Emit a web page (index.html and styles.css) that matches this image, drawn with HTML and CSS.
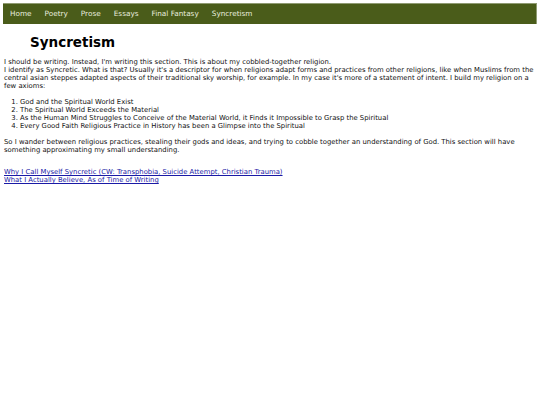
FILE: index.html
```html
<!DOCTYPE html>
<html>
<head>
<meta charset="utf-8">
<link rel="stylesheet" href="styles.css">
</head>
<body>
<nav class="nav">
  <a href="#">Home</a>
  <a href="#">Poetry</a>
  <a href="#">Prose</a>
  <a href="#">Essays</a>
  <a href="#">Final Fantasy</a>
  <a href="#">Syncretism</a>
</nav>
<main class="content">
  <h1 class="title">Syncretism</h1>
  <p class="para">I should be writing. Instead, I'm writing this section. This is about my cobbled-together religion.<br>
  I identify as Syncretic. What is that? Usually it's a descriptor for when religions adapt forms and practices from other religions, like when Muslims from the central asian steppes adapted aspects of their traditional sky worship, for example. In my case it's more of a statement of intent. I build my religion on a few axioms:</p>
  <ol class="axioms">
    <li>God and the Spiritual World Exist</li>
    <li>The Spiritual World Exceeds the Material</li>
    <li>As the Human Mind Struggles to Conceive of the Material World, it Finds it Impossible to Grasp the Spiritual</li>
    <li>Every Good Faith Religious Practice in History has been a Glimpse into the Spiritual</li>
  </ol>
  <p class="para">So I wander between religious practices, stealing their gods and ideas, and trying to cobble together an understanding of God. This section will have something approximating my small understanding.</p>
  <div class="links">
    <a href="#">Why I Call Myself Syncretic (CW: Transphobia, Suicide Attempt, Christian Trauma)</a><br>
    <a href="#">What I Actually Believe, As of Time of Writing</a>
  </div>
</main>
</body>
</html>
```

FILE: styles.css
```css
html, body {
  margin: 0;
  padding: 0;
  background: #ffffff;
}
body {
  font-family: "DejaVu Sans", Verdana, sans-serif;
  font-size: 6.85px;
  line-height: 8px;
  color: #111111;
  padding: 3px 3px 0 4px;
}
.nav {
  margin-left: -1px;
  height: 20px;
  background: #4a5c1a;
  border-top: 1px solid #8f9b72;
  border-right: 1px solid #8f9b72;
  display: flex;
  align-items: center;
  gap: 13px;
  padding-left: 7px;
}
.nav a {
  color: #e8ecdf;
  text-decoration: none;
  font-size: 7.3px;
}
.content {
  padding-top: 10px;
}
.title {
  font-size: 13.5px;
  line-height: 16px;
  font-weight: bold;
  margin: 0 0 0 26px;
  color: #000;
}
.para {
  margin: 8px 0;
}
.axioms {
  margin: 8px 0;
  padding-left: 16px;
}
.links {
  margin-top: 14px;
}
.links a {
  color: #1a1aa6;
}
```
